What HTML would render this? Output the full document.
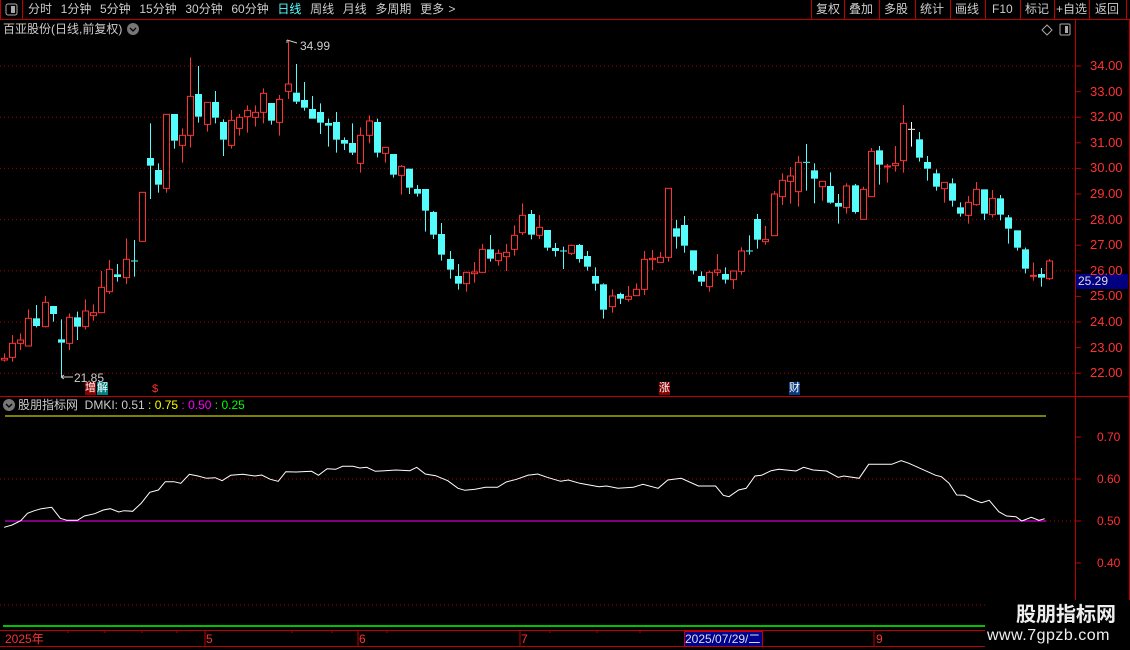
<!DOCTYPE html>
<html><head><meta charset="utf-8"><style>
*{margin:0;padding:0}
body{width:1130px;height:650px;background:#000;overflow:hidden;position:relative;font-family:"Liberation Sans","Noto Sans CJK SC",sans-serif}
.t{position:absolute;white-space:nowrap;font-size:12px;line-height:14px}
</style></head><body>
<svg id="s" width="1130" height="650" style="position:absolute;left:0;top:0" xmlns="http://www.w3.org/2000/svg"></svg>
<div class="t" style="left:28px;top:2px;color:#ccc;word-spacing:1px">分时 &nbsp;1分钟 &nbsp;5分钟 &nbsp;15分钟 &nbsp;30分钟 &nbsp;60分钟 &nbsp;<span style="color:#54ffff">日线</span> &nbsp;周线 &nbsp;月线 &nbsp;多周期 &nbsp;更多 &gt;</div>
<div class="t" style="left:816px;top:2px;color:#ccc">复权</div>
<div class="t" style="left:849px;top:2px;color:#ccc">叠加</div>
<div class="t" style="left:884px;top:2px;color:#ccc">多股</div>
<div class="t" style="left:920px;top:2px;color:#ccc">统计</div>
<div class="t" style="left:955px;top:2px;color:#ccc">画线</div>
<div class="t" style="left:992px;top:2px;color:#ccc">F10</div>
<div class="t" style="left:1025px;top:2px;color:#ccc">标记</div>
<div class="t" style="left:1056px;top:2px;color:#ccc">+自选</div>
<div class="t" style="left:1095px;top:2px;color:#ccc">返回</div>
<div class="t" style="left:3px;top:22px;color:#ccc">百亚股份(日线,前复权)</div>
<div class="t" style="left:300px;top:39px;color:#ccc">34.99</div>
<div class="t" style="left:74px;top:371px;color:#ccc">21.85</div>
<div class="t" style="left:85px;top:382px;color:#fff;background:#8a0000;font-size:11px;line-height:13px">增</div>
<div class="t" style="left:97px;top:382px;color:#fff;background:#008080;font-size:11px;line-height:13px">解</div>
<div class="t" style="left:152px;top:382px;color:#ff3030;font-size:11px">$</div>
<div class="t" style="left:659px;top:382px;color:#fff;background:#8a0000;font-size:11px;line-height:13px">涨</div>
<div class="t" style="left:789px;top:382px;color:#fff;background:#0a3a80;font-size:11px;line-height:13px">财</div>
<div class="t" style="left:18px;top:398px;color:#ccc">股朋指标网 &nbsp;DMKI: 0.51 <span style="color:#ffff00">: 0.75</span> <span style="color:#ff00ff">: 0.50</span> <span style="color:#00ff00">: 0.25</span></div>
<div class="t" style="left:1076px;top:274px;width:50px;height:15px;background:#000080;color:#ddd;padding-left:2px">25.29</div>
<div class="t" style="left:5px;top:632px;color:#ff3232">2025年</div>
<div class="t" style="left:206px;top:632px;color:#ff3232">5</div>
<div class="t" style="left:359px;top:632px;color:#ff3232">6</div>
<div class="t" style="left:521px;top:632px;color:#ff3232">7</div>
<div class="t" style="left:876px;top:632px;color:#ff3232">9</div>
<div class="t" style="left:685px;top:632px;width:77px;height:14px;background:#000090;color:#ddd;outline:1px solid #c00">2025/07/29/二</div>
<div style="position:absolute;left:985px;top:600px;width:145px;height:50px;background:#000"></div>
<div class="t" style="left:1016px;top:603px;color:#eee;font-size:20px;line-height:24px;font-weight:bold">股朋指标网</div>
<div class="t" style="left:987px;top:626px;color:#eee;font-size:16px;line-height:20px;letter-spacing:0.5px">www.7gpzb.com</div>
<div id="ax"></div>
<script>
var S=document.getElementById('s'),h='';
var R='#ff3232',C='#54fcfc',D='#c00000';
function L(x1,y1,x2,y2,c,w,da){h+='<line x1="'+x1+'" y1="'+y1+'" x2="'+x2+'" y2="'+y2+'" stroke="'+c+'" stroke-width="'+(w||1)+'"'+(da?' stroke-dasharray="'+da+'"':'')+'/>';}
L(0,19.5,1130,19.5,D);L(22.5,0,22.5,19,D);L(0.5,0,0.5,19,D);
[811,844,879,915,950,985,1020,1054,1089,1126].forEach(function(x){L(x+.5,0,x+.5,19,D);});
h+='<rect x="6" y="4" width="11" height="11" rx="2" fill="none" stroke="#aaa"/><rect x="11" y="6" width="4" height="7" fill="#aaa"/>';
h+='<circle cx="133" cy="29" r="6" fill="#777"/><path d="M130 28l3 3 3-3" stroke="#000" fill="none" stroke-width="1.3"/>';
h+='<path d="M1047 25l5 5-5 5-5-5z" fill="none" stroke="#aaa"/><rect x="1060" y="24" width="10" height="11" rx="1" fill="none" stroke="#aaa"/><rect x="1065" y="26" width="3" height="7" fill="#aaa"/>';
L(1075.5,19,1075.5,630,D);L(1129.5,19,1129.5,650,D);
L(0,396.5,1130,396.5,D);L(0,630.5,985,630.5,D);L(0,646.5,985,646.5,D);
[22,24,26,28,30,32,34].forEach(function(p){var y=66+(34-p)*25.6;L(0,y,1075,y,'#a00000',1,'1 3');});
var ax='';
for(var p=22;p<=34;p++){var y=66+(34-p)*25.6;L(1075,y,1081,y,D);ax+='<div class="t" style="left:1090px;top:'+(y-7)+'px;color:#ff3232;font-size:13px">'+p+'.00</div>';}
[[0.7,437],[0.6,479],[0.5,521],[0.4,563]].forEach(function(a){L(1075,a[1],1081,a[1],D);ax+='<div class="t" style="left:1097px;top:'+(a[1]-7)+'px;color:#ff3232;font-size:12px">'+a[0].toFixed(2)+'</div>';});
document.getElementById('ax').innerHTML=ax;
[479,605].forEach(function(y){L(0,y,1075,y,'#a00000',1,'1 3');});
L(1046,521,1075,521,'#a00000',1,'1 3');
L(5,416,1046,416,'#ffff00');L(5,521,1046,521,'#ff00ff');L(3,626,985,626,'#00ff00',1.5);
[68,105,142,177,292,332,387,550,597,640].forEach(function(x){L(x,630,x,633,D);});
[207,360,522,876].forEach(function(x){L(x-2,630,x-2,646,D);});
var d=[
'r955960940965','r910952885965','r900910880930','r835918808918','c835858795862','r787860768862','c798822798845','c898908838010','r832910820930','c832860815900','r813860778868','r818827793842','r742818693818','r688755660762','c703711672725','r658713595732','x663665600710','r457604457604','c354377250477','c390434370458','r223445223458','c222302222326','r286316265368','r169286052323','c162230078248','r187253187275','c186233153250','c246299238348','r241316210326','r232265222287','r211230196278','r217232196260','r160217145250','c189242189254','r178247165287','r132154000177','c158185072192','c180203126212','c207236168236','c216248190282','c249257236320','c246299216338','c300311292330','c309338250345','r286370262398','r243286226310','c246338236352','r322340322368','c342404342413','r379406375464','c386443386462','c447461435470','c447512447575','c516584513597','c582644549662','c657689633716','c708731672749','r697731695755','r696701666728','r628697612697','c628656585665','r640662628677','r637650612693','r586628556647','r526578490585','c522584510598',
'r562586525597','c570623570632','c624633609650','x633635620687','r616640614645','c615657612668','c648680633692','c708731682752','c733809730836','r768800748818','c762776758792','r769778738785','r748767730767','r658748633765','r655659630690','r652667636668','r445652445665','c565590540626','c555617528638','c631692631703','c708725694738','r697740692755','r690697642708','c702719682731','r693719693747','r633694622704','x633635586644','c537599522626','r598605558614','r462587453587','r421470400495','r408424381491','r367455348500','x367369312452','c391416370490','r424440424482','c438488397491','c489500462551','r438503430521','c436516432521','r448538440538','r334470324470','c331374318434','r378380372428','r370377318395','r250362195398','w268270246320','c298353276365','c366386348422','c400440388452','r427446427488','c430482415500','c502521487530','r487526468551','r448494426497','c448521448540','r475524450533','c475524465541','c532566525611','c571623571632','c628686623700','r706709668722','c702713684740','r663716657720'];
d.forEach(function(s,i){
var t=s[0],v=[+s.substr(1,3),+s.substr(4,3),+s.substr(7,3),+s.substr(10,3)];
if(i==7)v[3]=1010;
v=v.map(function(z){return 40+z/3;});
var x=Math.round(4+8.1*i)+.5,col=t=='r'?R:(t=='w'?'#fff':C);
L(x,v[2],x,v[0],col);L(x,v[1],x,v[3],col);
var hh=Math.max(v[1]-v[0],1);
if(t=='r')h+='<rect x="'+(x-3)+'" y="'+(v[0])+'" width="6" height="'+hh+'" fill="#000" stroke="'+R+'"/>';
else if(t=='c')h+='<rect x="'+(x-3.5)+'" y="'+v[0]+'" width="7" height="'+hh+'" fill="'+C+'"/>';
else L(x-3.5,v[0],x+3.5,v[0],t=='x'?C:col);
});
h+='<path d="M287 40v3M287 40l10 3" stroke="#ccc" fill="none"/><path d="M61 377h12M61 377l3-2M61 377l3 2" stroke="#ccc" fill="none"/>';
var a=[[12,262],[35,255],[60,242],[80,220],[100,212],[120,206],[150,202],[175,235],[195,241],[225,241],[245,228],[275,221],[300,210],[320,206],[345,216],[360,212],[385,214],[410,190],[435,157],[460,150],[480,125],[505,125],[525,130],[550,103],[575,108],[600,115],[625,113],[645,122],[670,106],[705,103],[740,108],[760,105],[785,118],[808,124],[830,95],[860,96],[905,94],[925,106],[950,86],[975,88],[995,79],[1025,79],[1045,84],[1065,82],[1090,94],[1150,90],[1190,92],[1210,82],[1235,102],[1265,107],[1300,122],[1330,145],[1350,151],[1380,148],[1410,142],[1445,142],[1470,126],[1500,118],[1535,105]];
var b=[[0,105],[20,102],[45,112],[80,124],[100,120],[130,130],[180,140],[200,138],[230,145],[270,142],[295,133],[335,145],[360,120],[395,115],[440,138],[485,138],[505,166],[520,170],[545,150],[565,145],[588,108],[605,106],[630,92],[650,88],[695,93],[715,82],[740,90],[775,93],[805,112],[820,108],[860,115],[885,73],[945,73],[970,62],[990,70],[1060,106],[1075,110],[1095,130],[1115,165],[1135,166],[1160,180],[1180,188],[1200,181],[1225,215],[1245,228],[1270,230],[1285,243],[1310,232],[1330,241],[1345,236]];
var pts=a.map(function(p){return (p[0]/2.904).toFixed(1)+','+(440+p[1]/3).toFixed(1);}).concat(b.map(function(p){return (530+p[0]/2.613).toFixed(1)+','+(440+p[1]/3).toFixed(1);}));
h+='<polyline points="'+pts.join(' ')+'" fill="none" stroke="#fff" stroke-width="1"/>';
h+='<circle cx="9" cy="405" r="6" fill="#777"/><path d="M6 404l3 3 3-3" stroke="#000" fill="none" stroke-width="1.3"/>';
S.innerHTML=h;
</script>
</body></html>
